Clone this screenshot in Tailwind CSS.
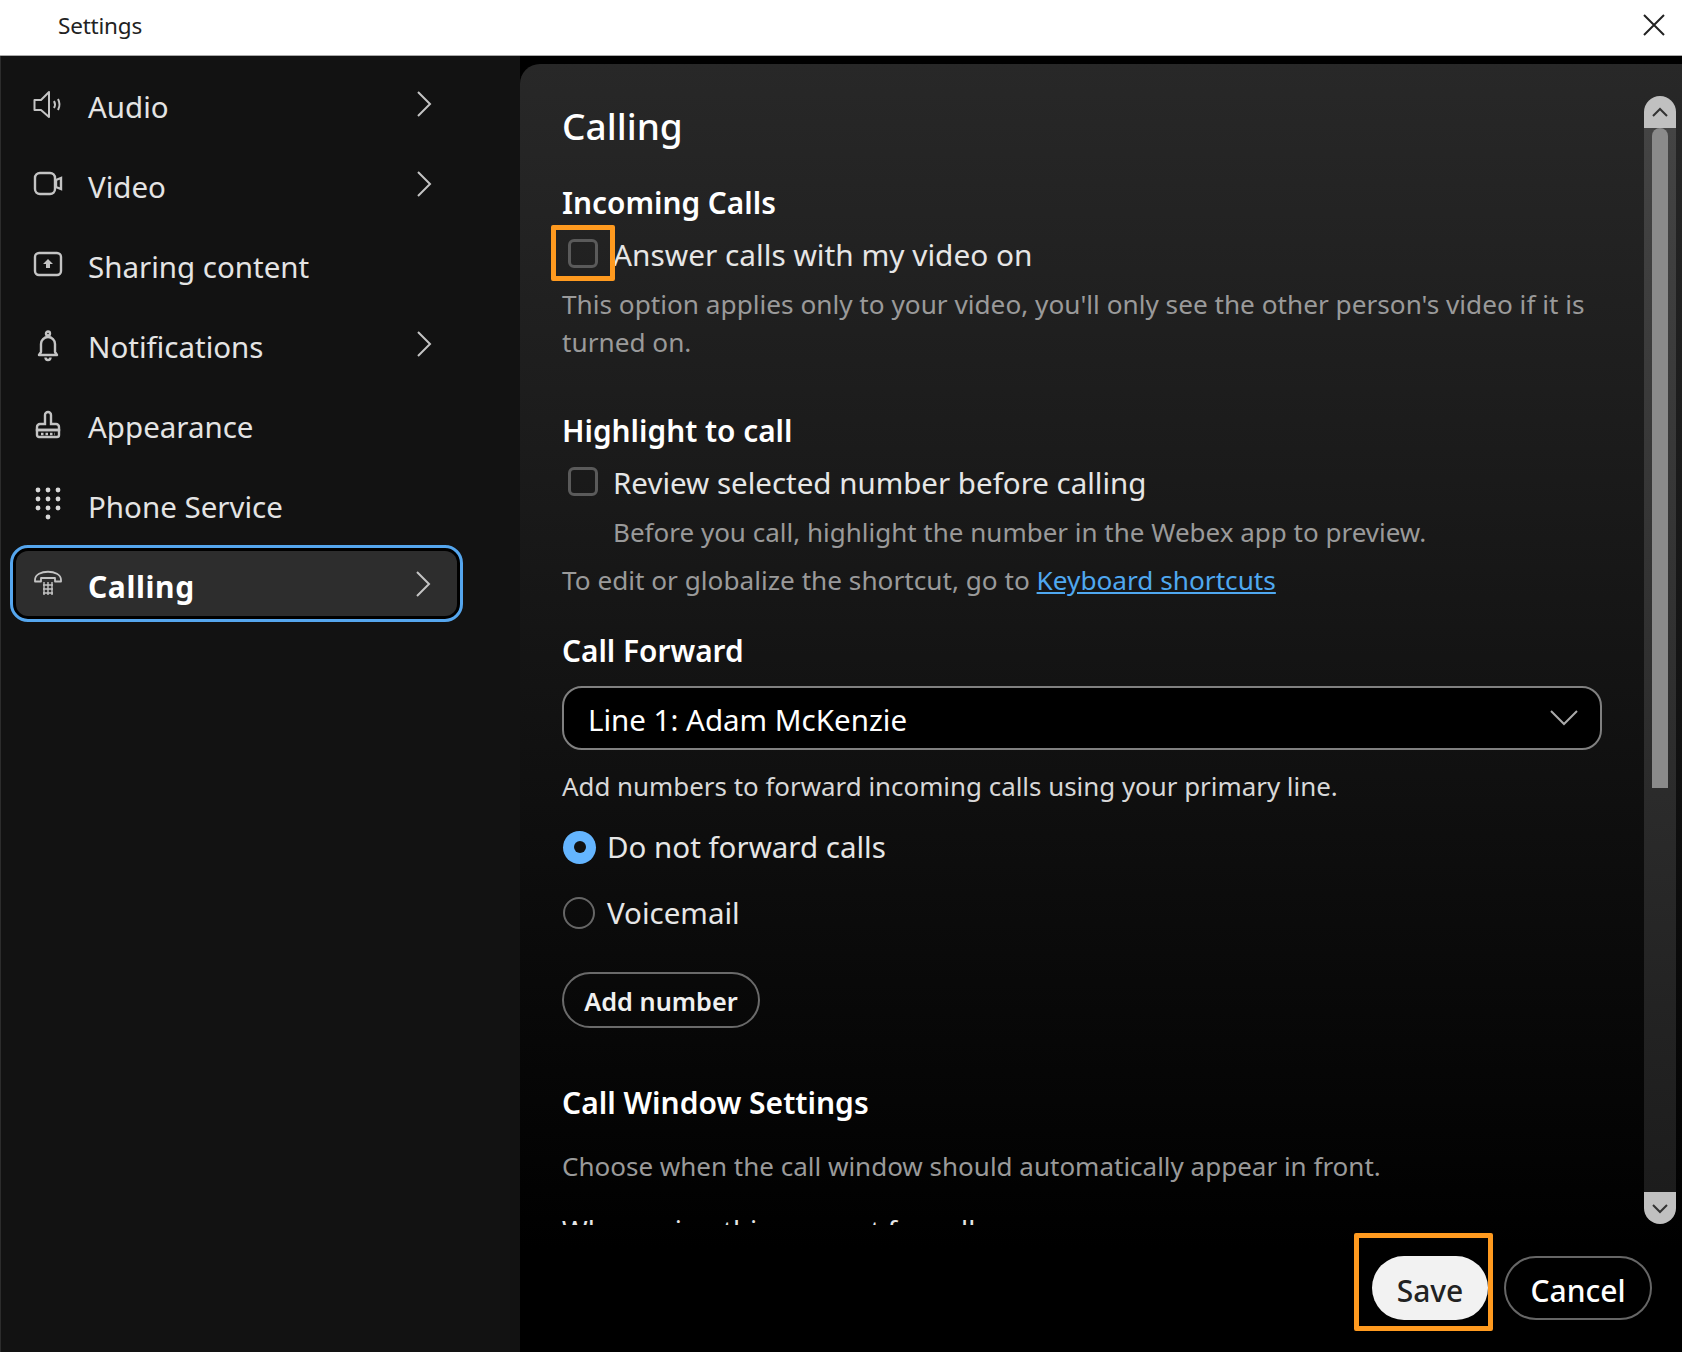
<!DOCTYPE html>
<html lang="en">
<head>
    <meta charset="UTF-8">
    <title>Settings</title>
    <script src="https://cdn.jsdelivr.net/npm/@tailwindcss/browser@4"></script>
</head>
<body class="font-['Noto_Sans',sans-serif] bg-black h-[1352px] w-[1682px] overflow-hidden flex flex-col">
    <!-- title bar -->
    <div class="h-[56px] bg-white border-b border-[#aaaaaa] flex items-center justify-between pl-[58px] pr-[17px] shrink-0">
        <span class="text-[22.500px] text-[#222222] tracking-[-0.2px] pb-[3px]">Settings</span>
        <svg class="mb-[6px]" width="22" height="22" viewBox="0 0 22 22" fill="none" stroke="#222222" stroke-width="2"><path d="M1 1l20 20M21 1L1 21"/></svg>
    </div>

    <div class="flex flex-1 min-h-0">
        <!-- left nav -->
        <nav class="w-[520px] shrink-0 bg-[#121212] border-l border-[#2c2c2c] pt-[10px] text-[#e4e4e4] text-[29.500px]">
            <div class="h-[80px] flex items-center pl-[31px] pr-[88px]">
                <svg class="overflow-visible" width="32" height="32" viewBox="0 0 32 32" fill="none" stroke="#c4c4c4" stroke-width="2"><path d="M2.500 10H9L17 2V27L9 20H2.500Z" stroke-linejoin="round"/><path d="M22 11q2 3.500 0 7M26 9q3 5.500 0 11"/></svg>
                <span class="ml-[24px] flex-1 pt-[2px]">Audio</span>
                <svg class="mb-[5px]" width="16" height="28" viewBox="0 0 16 28" fill="none" stroke="#c4c4c4" stroke-width="2"><path d="M2 2l12 12L2 26"/></svg>
            </div>
            <div class="h-[80px] flex items-center pl-[31px] pr-[88px]">
                <svg class="overflow-visible" width="32" height="32" viewBox="0 0 32 32" fill="none" stroke="#c4c4c4" stroke-width="2.400"><rect x="3" y="3" width="20" height="21" rx="5"/><path d="M24 10l5-2v11l-5-2z"/></svg>
                <span class="ml-[24px] flex-1 pt-[2px]">Video</span>
                <svg class="mb-[5px]" width="16" height="28" viewBox="0 0 16 28" fill="none" stroke="#c4c4c4" stroke-width="2"><path d="M2 2l12 12L2 26"/></svg>
            </div>
            <div class="h-[80px] flex items-center pl-[31px] pr-[88px]">
                <svg class="overflow-visible" width="32" height="32" viewBox="0 0 32 32" fill="none" stroke="#c4c4c4" stroke-width="2.400"><rect x="3" y="3" width="26" height="22" rx="4"/><path d="M16 9l5 5h-3v4h-4v-4h-3z" fill="#c4c4c4" stroke="none"/></svg>
                <span class="ml-[24px] flex-1 pt-[2px]">Sharing content</span>
            </div>
            <div class="h-[80px] flex items-center pl-[31px] pr-[88px]">
                <svg class="overflow-visible" width="32" height="32" viewBox="0 0 32 32" fill="none" stroke="#c4c4c4" stroke-width="2.400"><circle cx="16" cy="3.500" r="2"/><path d="M9 22V14a7 7 0 0 1 14 0V22l2 3H7Z" stroke-linejoin="round"/><path d="M13.500 27.500a2.500 2.500 0 0 0 5 0"/></svg>
                <span class="ml-[24px] flex-1 pt-[2px]">Notifications</span>
                <svg class="mb-[5px]" width="16" height="28" viewBox="0 0 16 28" fill="none" stroke="#c4c4c4" stroke-width="2"><path d="M2 2l12 12L2 26"/></svg>
            </div>
            <div class="h-[80px] flex items-center pl-[31px] pr-[88px]">
                <svg class="overflow-visible" width="32" height="32" viewBox="0 0 32 32" fill="none" stroke="#c4c4c4" stroke-width="2.400"><path d="M13 14V5a3 3 0 0 1 6 0V14h5a3 3 0 0 1 3 3v3H5v-3a3 3 0 0 1 3-3Z"/><path d="M5 20h22v5a2 2 0 0 1-2 2H7a2 2 0 0 1-2-2Z"/><path d="M9 24h14" stroke-dasharray="2.500 2"/></svg>
                <span class="ml-[24px] flex-1 pt-[2px]">Appearance</span>
            </div>
            <div class="h-[80px] flex items-center pl-[31px] pr-[88px]">
                <svg class="overflow-visible" width="32" height="32" viewBox="0 0 32 32" fill="#d8d8d8"><circle cx="6" cy="0" r="2.400"/><circle cx="16" cy="0" r="2.400"/><circle cx="26" cy="0" r="2.400"/><circle cx="6" cy="9" r="2.400"/><circle cx="16" cy="9" r="2.400"/><circle cx="26" cy="9" r="2.400"/><circle cx="6" cy="18" r="2.400"/><circle cx="16" cy="18" r="2.400"/><circle cx="26" cy="18" r="2.400"/><circle cx="16" cy="27" r="2.400"/></svg>
                <span class="ml-[24px] flex-1 pt-[2px]">Phone Service</span>
            </div>
            <div class="h-[77px] -mt-[1px] ml-[9px] mr-[57px] border-[3px] border-[#55a6ee] rounded-[18px] bg-black p-[3px]">
                <div class="h-full bg-[#2d2d2d] rounded-[12px] flex items-center pl-[16px] pr-[26px] text-white font-bold text-[30px] tracking-[0.6px]">
                    <svg class="overflow-visible" width="32" height="32" viewBox="0 0 32 32" fill="none" stroke="#c4c4c4" stroke-width="1.800"><path d="M3 12C3 1 29 1 29 12v1.500h-6V10H9v3.500H3Z" stroke-linejoin="round"/><path d="M11 17h10M11 21h10M11 25h10M12 14v13M16 14v13M20 14v13" stroke-width="1.400"/></svg>
                    <span class="ml-[24px] flex-1 pt-[5px]">Calling</span>
                    <svg width="16" height="28" viewBox="0 0 16 28" fill="none" stroke="#c4c4c4" stroke-width="2"><path d="M2 2l12 12L2 26"/></svg>
                </div>
            </div>
        </nav>

        <!-- main panel -->
        <main class="relative flex-1 mt-[8px] rounded-tl-[20px] bg-[linear-gradient(#282828,#000000_92%)] flex flex-col min-w-0">
            <div class="flex h-[1161px] shrink-0">
                <div class="w-[1082px] pl-[42px] overflow-hidden text-[29.500px] text-[#e6e6e6]">
                    <h1 class="h-[48px] mt-[39px] pb-[2px] flex items-center text-[37px] font-medium text-white">Calling</h1>
                    <h2 class="h-[40px] mt-[32px] flex items-center text-[29.800px] font-semibold text-white">Incoming Calls</h2>
                    <div class="h-[40px] mt-[12px] flex items-center">
                        <span class="w-[30px] h-[29px] ml-[6px] -mt-[3px] border-[3px] border-[#5a5a5a] rounded-[6px] shrink-0"></span>
                        <span class="ml-[15px] text-[29.800px]">Answer calls with my video on</span>
                    </div>
                    <p class="mt-[10px] text-[26.200px] leading-[38px] text-[#9a9a9a]">This option applies only to your video, you'll only see the other person's video if it is turned on.</p>

                    <h2 class="h-[40px] mt-[50px] flex items-center text-[29.800px] font-semibold text-white">Highlight to call</h2>
                    <div class="h-[40px] mt-[12px] flex items-center">
                        <span class="w-[30px] h-[29px] ml-[6px] -mt-[3px] border-[3px] border-[#5a5a5a] rounded-[6px] shrink-0"></span>
                        <span class="ml-[15px]">Review selected number before calling</span>
                    </div>
                    <p class="h-[38px] mt-[10px] pl-[51px] flex items-center text-[26px] text-[#9a9a9a]">Before you call, highlight the number in the Webex app to preview.</p>
                    <p class="h-[38px] mt-[11px] flex items-center text-[26.200px] text-[#9a9a9a]">To edit or globalize the shortcut, go to&nbsp;<a class="text-[#4fa8f0] underline">Keyboard shortcuts</a></p>

                    <h2 class="h-[40px] mt-[31px] flex items-center text-[29.800px] font-semibold text-white">Call Forward</h2>
                    <div class="h-[64px] mt-[15px] w-[1040px] bg-black border-[2px] border-[#808080] rounded-[20px] flex items-center justify-between pl-[24px] pr-[21px]">
                        <span class="text-white pt-[5px]">Line 1: Adam McKenzie</span>
                        <svg width="30" height="18" viewBox="0 0 30 18" fill="none" stroke="#aaaaaa" stroke-width="2"><path d="M2 2l13 13L28 2"/></svg>
                    </div>
                    <p class="h-[38px] mt-[17px] flex items-center text-[25.900px] text-[#d8d8d8]">Add numbers to forward incoming calls using your primary line.</p>
                    <div class="h-[40px] mt-[22px] flex items-center">
                        <span class="w-[33px] h-[33px] rounded-full bg-[#64b5ff] flex items-center justify-center ml-[1px] shrink-0"><span class="w-[12px] h-[12px] rounded-full bg-[#111111]"></span></span>
                        <span class="ml-[11px]">Do not forward calls</span>
                    </div>
                    <div class="h-[40px] mt-[26px] flex items-center">
                        <span class="w-[32px] h-[32px] rounded-full border-[2px] border-[#666666] ml-[1px] shrink-0"></span>
                        <span class="ml-[12px]">Voicemail</span>
                    </div>
                    <button class="h-[56px] w-[198px] mt-[39px] pt-[4px] rounded-full border-[2px] border-[#6a6a6a] text-[25.300px] font-semibold text-[#f0f0f0]">Add number</button>
                    <h2 class="h-[40px] mt-[54px] flex items-center text-[30px] font-semibold text-white">Call Window Settings</h2>
                    <p class="h-[38px] mt-[25px] flex items-center text-[26px] text-[#9a9a9a]">Choose when the call window should automatically appear in front.</p>
                    <p class="h-[38px] mt-[27px] flex items-center text-[27.600px] text-[#e6e6e6]">When using this account for calls</p>
                </div>
                <!-- scrollbar -->
                <div class="w-[32px] mt-[32px] mb-[1px] flex flex-col shrink-0 ml-[42px]">
                    <div class="h-[32px] bg-[#c0c0c0] rounded-t-[16px] flex items-center justify-center">
                        <svg width="18" height="11" viewBox="0 0 18 11" fill="none" stroke="#333333" stroke-width="2"><path d="M2 9l7-7 7 7"/></svg>
                    </div>
                    <div class="flex-1 bg-[linear-gradient(#444444,#1c1c1c)] flex justify-center">
                        <div class="w-[16px] h-[660px] bg-[#8a8a8a] rounded-t-[8px]"></div>
                    </div>
                    <div class="h-[32px] bg-[#c0c0c0] rounded-b-[16px] flex items-center justify-center">
                        <svg width="18" height="11" viewBox="0 0 18 11" fill="none" stroke="#333333" stroke-width="2"><path d="M2 2l7 7 7-7"/></svg>
                    </div>
                </div>
            </div>
            <div class="flex justify-end gap-[16px] pt-[31px] pr-[30px]">
                <button class="w-[116px] h-[64px] pt-[4px] rounded-full bg-[#f2f2f2] text-[#222222] text-[30px] font-medium">Save</button>
                <button class="w-[148px] h-[64px] pt-[4px] rounded-full border-[2px] border-[#666666] text-white text-[30px] font-medium">Cancel</button>
            </div>
        </main>
    </div>

    <!-- orange callouts drawn over the screenshot -->
    <div class="absolute left-[551px] top-[225px] w-[64px] h-[56px] border-[5px] border-[#ff9a1f] rounded-[2px]"></div>
    <div class="absolute left-[1354px] top-[1233px] w-[139px] h-[98px] border-[5px] border-[#ff9a1f] rounded-[2px]"></div>
</body>
</html>
